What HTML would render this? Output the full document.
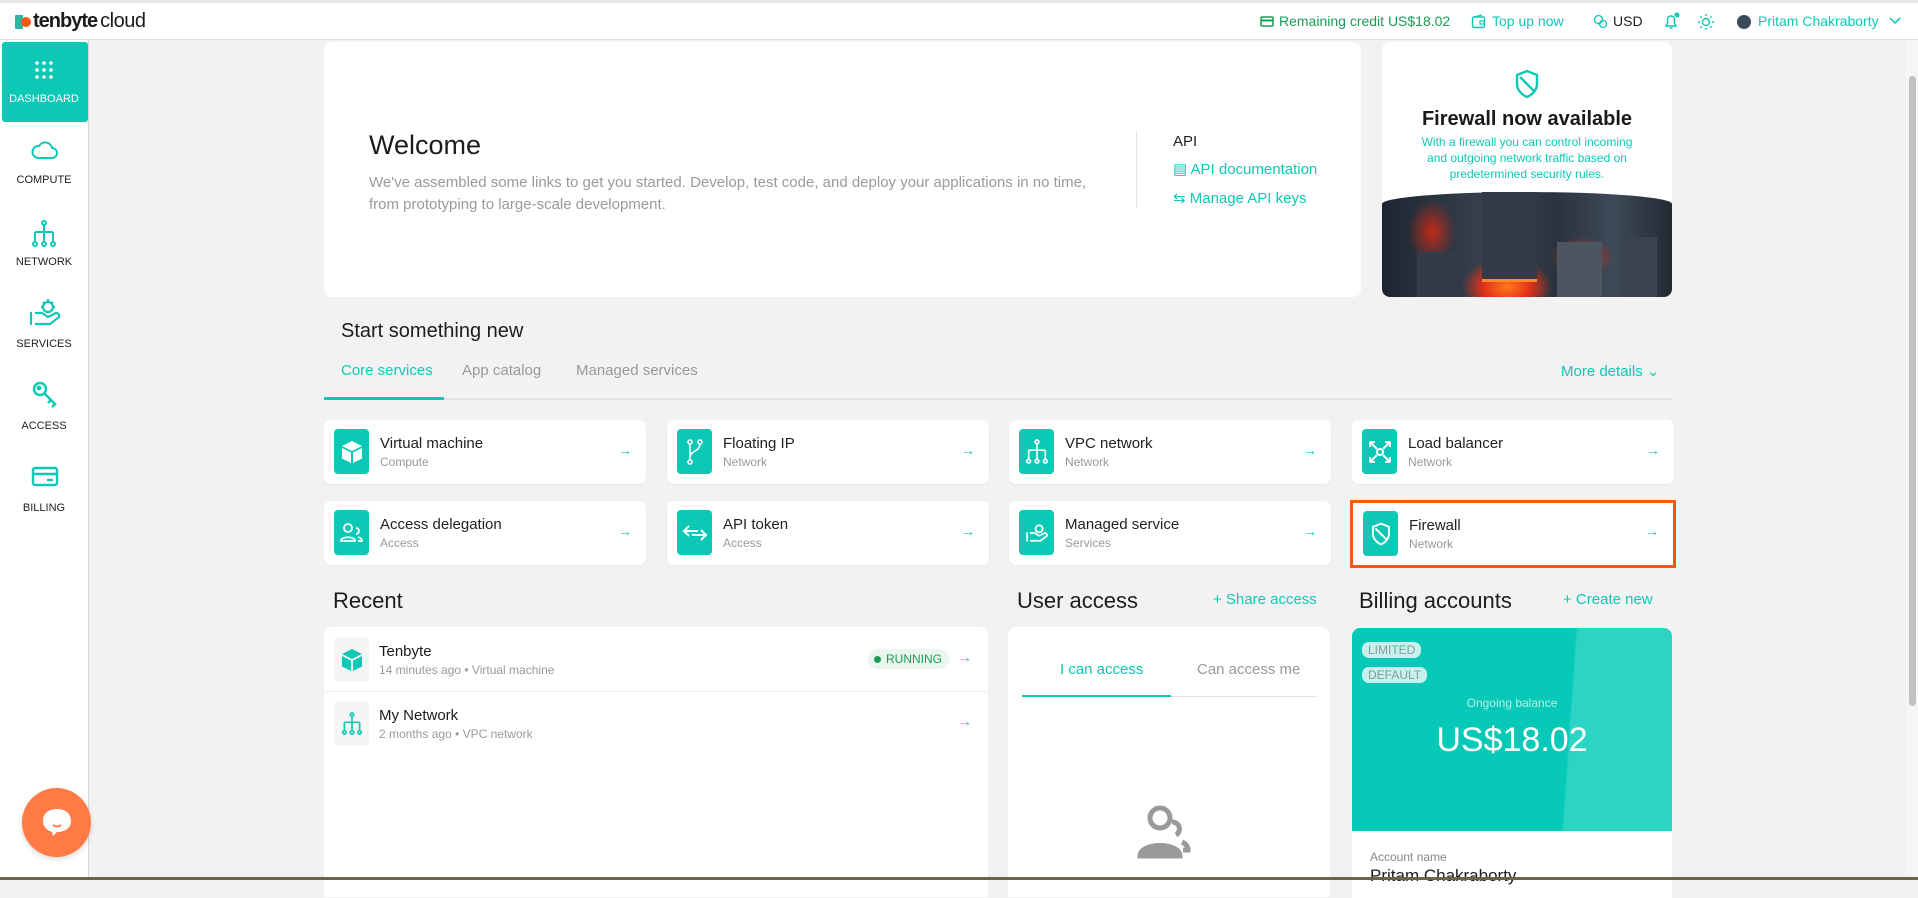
<!DOCTYPE html>
<html><head><meta charset="utf-8">
<style>
*{box-sizing:border-box;margin:0;padding:0}
body{width:1918px;height:880px;overflow:hidden;background:#f2f2f2;font-family:"Liberation Sans",sans-serif;color:#1c1c1c;position:relative}
.abs{position:absolute}
.t{color:#0fc8b6}
.hdr{left:0;top:0;width:1918px;height:40px;background:#fff;border-top:3px solid #e6e6e6;border-bottom:1px solid #dcdcdc}
.side{left:0;top:40px;width:89px;height:840px;background:#fff;border-right:1px solid #d9d9d9}
.nav{position:absolute;left:0;width:88px;text-align:center;font-size:11px;color:#222}
.card{position:absolute;background:#fff;border-radius:8px}
.svc{position:absolute;background:#fff;border-radius:7px;width:322px;height:64px;box-shadow:0 1px 2px rgba(0,0,0,.04)}
.svc .ic{position:absolute;left:10px;width:35px;height:45px;top:9px;background:#0cc9b6;border-radius:4px;display:flex;align-items:center;justify-content:center}
.svc .tt{position:absolute;left:56px;top:15px;font-size:15px;color:#222}
.svc .st{position:absolute;left:56px;top:35px;font-size:12px;color:#999}
.svc .ar{position:absolute;right:14px;top:22px;color:#0fc8b6;font-size:14px}
.h2{position:absolute;font-size:22px;color:#1c1c1c}
</style></head><body>

<div class="abs hdr">
  <div class="abs" style="left:15px;top:7px;display:flex;align-items:center">
    <div style="width:8px;height:14px;background:#2bb5a3;border-radius:1px"></div>
    <div style="width:10px;height:10px;background:#f45b19;border-radius:50%;margin-left:-2px"></div>
    <span style="font-size:20px;font-weight:bold;letter-spacing:-1px;margin-left:2px;color:#1b1b1b">tenbyte</span><span style="font-size:20px;color:#1b1b1b;margin-left:3px;letter-spacing:-0.5px">cloud</span>
  </div>
  <div class="abs" style="left:1260px;top:10px;font-size:14px;color:#1a9c55;display:flex;align-items:center;gap:5px">
    <svg width="14" height="11" viewBox="0 0 14 11"><rect x="1" y="1" width="12" height="9" rx="1" fill="none" stroke="#1a9c55" stroke-width="1.5"/><line x1="1" y1="4.5" x2="13" y2="4.5" stroke="#1a9c55" stroke-width="2"/></svg>Remaining credit US$18.02</div>
  <div class="abs t" style="left:1471px;top:10px;font-size:14px;display:flex;align-items:center;gap:6px">
    <svg width="15" height="15" viewBox="0 0 15 15"><rect x="1.5" y="3" width="12" height="10.5" rx="1.5" fill="none" stroke="#0fc8b6" stroke-width="1.4"/><path d="M3 3 L11 1" stroke="#0fc8b6" stroke-width="1.4"/><rect x="9" y="7" width="4" height="3" fill="none" stroke="#0fc8b6" stroke-width="1.2"/></svg>Top up now</div>
  <div class="abs" style="left:1593px;top:10px;font-size:14px;display:flex;align-items:center;gap:5px">
    <svg width="15" height="15" viewBox="0 0 15 15" fill="none" stroke="#0fc8b6" stroke-width="1.3"><circle cx="5.5" cy="5.5" r="4"/><circle cx="10" cy="10" r="3.5"/></svg>USD</div>
  <svg class="abs" style="left:1662px;top:8px" width="20" height="20" viewBox="0 0 20 20" fill="none" stroke="#0fc8b6" stroke-width="1.5"><path d="M4 15 H14 L12.5 12.5 V8.5 A3.5 3.5 0 0 0 5.5 8.5 V12.5 Z"/><path d="M7.5 17 H10.5"/><circle cx="15" cy="4" r="2.5" fill="#0fc8b6" stroke="none"/></svg>
  <svg class="abs" style="left:1697px;top:10px" width="18" height="18" viewBox="0 0 18 18" fill="none" stroke="#0fc8b6" stroke-width="1.4"><circle cx="9" cy="9" r="3.5"/><path d="M9 1v2M9 15v2M1 9h2M15 9h2M3.3 3.3l1.4 1.4M13.3 13.3l1.4 1.4M3.3 14.7l1.4-1.4M13.3 4.7l1.4-1.4"/></svg>
  <div class="abs" style="left:1737px;top:12px;width:14px;height:14px;border-radius:50%;background:#3c4a5a"></div>
  <div class="abs t" style="left:1758px;top:10px;font-size:14px">Pritam Chakraborty</div>
  <svg class="abs" style="left:1889px;top:14px" width="12" height="8" viewBox="0 0 12 8"><path d="M1 1 L6 6 L11 1" fill="none" stroke="#0fc8b6" stroke-width="1.5"/></svg>
</div>

<div class="abs side">
  <div class="abs" style="left:2px;top:2px;width:86px;height:80px;background:#0cc9b6;border-radius:3px"></div>
  <svg class="abs" style="left:34px;top:20px" width="20" height="20" viewBox="0 0 20 20" fill="#fff"><circle cx="3" cy="3" r="1.8"/><circle cx="10" cy="3" r="1.8"/><circle cx="17" cy="3" r="1.8"/><circle cx="3" cy="10" r="1.8"/><circle cx="10" cy="10" r="1.8"/><circle cx="17" cy="10" r="1.8"/><circle cx="3" cy="17" r="1.8"/><circle cx="10" cy="17" r="1.8"/><circle cx="17" cy="17" r="1.8"/></svg>
  <div class="nav" style="top:53px;color:#fff">DASHBOARD</div>
  <svg class="abs" style="left:31px;top:98px" width="28" height="22" viewBox="0 0 28 22" fill="none" stroke="#0fc8b6" stroke-width="2"><path d="M7 20 H21 A5 5 0 0 0 21 10 A7 7 0 0 0 8 8 A6 6 0 0 0 7 20 Z"/></svg>
  <div class="nav" style="top:134px">COMPUTE</div>
  <svg class="abs" style="left:31px;top:180px" width="26" height="28" viewBox="0 0 26 28" fill="none" stroke="#0fc8b6" stroke-width="2"><circle cx="13" cy="3" r="2"/><path d="M13 5V12M4 12H22M4 12V22M13 12V22M22 12V22"/><circle cx="4" cy="24" r="2"/><circle cx="13" cy="24" r="2"/><circle cx="22" cy="24" r="2"/></svg>
  <div class="nav" style="top:216px">NETWORK</div>
  <svg class="abs" style="left:28px;top:258px" width="34" height="30" viewBox="0 0 34 30" fill="none" stroke="#0fc8b6" stroke-width="2.2"><path d="M3 14V27"/><path d="M7 15H14L20 19L28 15A3 3 0 0 1 31 19L22 26H7"/><circle cx="20" cy="9" r="5"/><path d="M20 1V3M27 9H25M13 9H15M15 4L16.5 5.5M25 4L23.5 5.5"/></svg>
  <div class="nav" style="top:298px">SERVICES</div>
  <svg class="abs" style="left:31px;top:340px" width="28" height="30" viewBox="0 0 28 30" fill="none" stroke="#0fc8b6" stroke-width="2.4"><circle cx="9" cy="9" r="6"/><circle cx="8" cy="8" r="1.2" fill="#0fc8b6"/><path d="M13 13L25 25M20 20L17 23M24 24L21 27"/></svg>
  <div class="nav" style="top:380px">ACCESS</div>
  <svg class="abs" style="left:31px;top:426px" width="28" height="22" viewBox="0 0 28 22" fill="none" stroke="#0fc8b6" stroke-width="2.4"><rect x="2" y="2" width="24" height="17" rx="2"/><line x1="2" y1="8" x2="26" y2="8"/><line x1="16" y1="14" x2="22" y2="14"/></svg>
  <div class="nav" style="top:462px">BILLING</div>
  <div class="abs" style="left:22px;top:748px;width:69px;height:69px;border-radius:50%;background:#ff7a45;box-shadow:0 2px 6px rgba(0,0,0,.15)"></div>
  <svg class="abs" style="left:39px;top:765px" width="36" height="36" viewBox="0 0 36 36"><path d="M18 4 C27 4 32 9 32 16 C32 23 26 27 18 27 L14 31 L13 27 C7 25 4 21 4 16 C4 9 9 4 18 4Z" fill="#fff"/><path d="M14 20 Q18 23 22 20" stroke="#ff7a45" stroke-width="2" fill="none"/></svg>
</div>

<div class="card" style="left:324px;top:42px;width:1037px;height:255px">
  <div class="abs" style="left:45px;top:88px;font-size:27px;color:#1c1c1c">Welcome</div>
  <div class="abs" style="left:45px;top:130px;font-size:15px;color:#9a9a9a;line-height:22px;width:720px">We've assembled some links to get you started. Develop, test code, and deploy your applications in no time, from prototyping to large-scale development.</div>
  <div class="abs" style="left:812px;top:90px;width:1px;height:76px;background:#e2e2e2"></div>
  <div class="abs" style="left:849px;top:91px;font-size:15px;color:#222">API</div>
  <div class="abs t" style="left:849px;top:118px;font-size:15px">&#9636; API documentation</div>
  <div class="abs t" style="left:849px;top:147px;font-size:15px">&#8646; Manage API keys</div>
</div>

<div class="card" style="left:1382px;top:42px;width:290px;height:255px;overflow:hidden">
  <svg class="abs" style="left:133px;top:27px" width="24" height="30" viewBox="0 0 24 30" fill="none" stroke="#0fc8b6" stroke-width="2.4"><path d="M12 2L22 6V15C22 21 17 26 12 28C7 26 2 21 2 15V6Z"/><path d="M5 8L19 22"/></svg>
  <div class="abs" style="left:0;width:290px;top:66px;text-align:center;font-size:20px;font-weight:bold;color:#1a1a1a">Firewall now available</div>
  <div class="abs t" style="left:28px;width:234px;top:92px;text-align:center;font-size:12px;line-height:16px">With a firewall you can control incoming and outgoing network traffic based on predetermined security rules.</div>
  <div class="abs" style="left:0;top:150px;width:290px;height:110px;border-radius:50% 50% 0 0/12px 12px 0 0;background:radial-gradient(ellipse 60px 40px at 125px 95px,#ff7a1a 0%,#e0301a 40%,transparent 75%),radial-gradient(ellipse 40px 25px at 200px 65px,#d5301b 0%,transparent 80%),radial-gradient(ellipse 30px 40px at 50px 40px,#c02a1a 0%,transparent 80%),linear-gradient(90deg,#1d2630,#3a4552 40%,#2a333d 60%,#3e4a58 80%,#222a33)"></div>
  <div class="abs" style="left:100px;top:150px;width:55px;height:90px;background:#323b45;border-bottom:3px solid #ff8a2a"></div>
  <div class="abs" style="left:175px;top:200px;width:45px;height:60px;background:#4b5662"></div>
  <div class="abs" style="left:35px;top:210px;width:40px;height:50px;background:#333c46"></div>
  <div class="abs" style="left:240px;top:195px;width:35px;height:60px;background:#3a4450"></div>
</div>

<div class="h2" style="left:341px;top:320px;font-size:20px">Start something new</div>
<div class="abs t" style="left:341px;top:362px;font-size:15px">Core services</div>
<div class="abs" style="left:462px;top:362px;font-size:15px;color:#999">App catalog</div>
<div class="abs" style="left:576px;top:362px;font-size:15px;color:#999">Managed services</div>
<div class="abs t" style="left:1561px;top:362px;font-size:15px">More details &#8964;</div>
<div class="abs" style="left:324px;top:398px;width:1348px;height:2px;background:#e3e3e3"></div>
<div class="abs" style="left:324px;top:397px;width:120px;height:3px;background:#0cc9b6"></div>

<div class="svc" style="left:324px;top:420px"><div class="ic"><svg width="22" height="24" viewBox="0 0 22 24" fill="#fff"><path d="M11 1L21 6L11 11L1 6Z"/><path d="M1 8L10 12.5V23L1 18.5Z"/><path d="M21 8L12 12.5V23L21 18.5Z"/></svg></div><div class="tt">Virtual machine</div><div class="st">Compute</div><div class="ar">&#8594;</div></div>
<div class="svc" style="left:667px;top:420px"><div class="ic"><svg width="18" height="28" viewBox="0 0 18 28" fill="none" stroke="#fff" stroke-width="1.6"><circle cx="4" cy="4" r="2"/><circle cx="14" cy="4" r="2"/><circle cx="4" cy="24" r="2"/><path d="M4 6V22M14 6C14 14 4 12 4 20"/></svg></div><div class="tt">Floating IP</div><div class="st">Network</div><div class="ar">&#8594;</div></div>
<div class="svc" style="left:1009px;top:420px"><div class="ic"><svg width="24" height="26" viewBox="0 0 26 28" fill="none" stroke="#fff" stroke-width="1.8"><circle cx="13" cy="3" r="2"/><path d="M13 5V12M4 12H22M4 12V22M13 12V22M22 12V22"/><circle cx="4" cy="24" r="2"/><circle cx="13" cy="24" r="2"/><circle cx="22" cy="24" r="2"/></svg></div><div class="tt">VPC network</div><div class="st">Network</div><div class="ar">&#8594;</div></div>
<div class="svc" style="left:1352px;top:420px"><div class="ic"><svg width="24" height="24" viewBox="0 0 24 24" fill="none" stroke="#fff" stroke-width="2"><path d="M2 2L9 9M22 2L15 9M2 22L9 15M22 22L15 15M2 2h5M2 2v5M22 2h-5M22 2v5M2 22h5M2 22v-5M22 22h-5M22 22v-5"/><circle cx="12" cy="12" r="3"/></svg></div><div class="tt">Load balancer</div><div class="st">Network</div><div class="ar">&#8594;</div></div>

<div class="svc" style="left:324px;top:501px"><div class="ic"><svg width="26" height="22" viewBox="0 0 26 22" fill="none" stroke="#fff" stroke-width="1.8"><circle cx="9" cy="6" r="4"/><path d="M2 19C2 14 16 14 16 19Z"/><path d="M17 6A3 3 0 0 1 17 12M19 15C22 16 23 17 23 19H19"/></svg></div><div class="tt">Access delegation</div><div class="st">Access</div><div class="ar">&#8594;</div></div>
<div class="svc" style="left:667px;top:501px"><div class="ic"><svg width="26" height="20" viewBox="0 0 26 20" fill="none" stroke="#fff" stroke-width="2"><path d="M7 3L2 8L7 13M2 8H16M19 7L24 12L19 17M24 12H10"/></svg></div><div class="tt">API token</div><div class="st">Access</div><div class="ar">&#8594;</div></div>
<div class="svc" style="left:1009px;top:501px"><div class="ic"><svg width="24" height="22" viewBox="0 0 34 30" fill="none" stroke="#fff" stroke-width="2.4"><path d="M3 14V27"/><path d="M7 15H14L20 19L28 15A3 3 0 0 1 31 19L22 26H7"/><circle cx="20" cy="9" r="5"/></svg></div><div class="tt">Managed service</div><div class="st">Services</div><div class="ar">&#8594;</div></div>
<div class="abs" style="left:1350px;top:500px;width:326px;height:68px;border:3px solid #f25a12"></div>
<div class="svc" style="left:1353px;top:503px;width:320px;height:62px;border-radius:0"><div class="ic" style="top:8px"><svg width="20" height="24" viewBox="0 0 24 30" fill="none" stroke="#fff" stroke-width="2.4"><path d="M12 2L22 6V15C22 21 17 26 12 28C7 26 2 21 2 15V6Z"/><path d="M5 8L19 22"/></svg></div><div class="tt" style="top:14px">Firewall</div><div class="st" style="top:34px">Network</div><div class="ar" style="top:20px">&#8594;</div></div>

<div class="h2" style="left:333px;top:588px">Recent</div>
<div class="card" style="left:324px;top:627px;width:664px;height:270px;border-radius:8px 8px 0 0">
  <div class="abs" style="left:10px;top:10px;width:35px;height:45px;background:#f5f5f5;border-radius:4px;display:flex;align-items:center;justify-content:center"><svg width="22" height="24" viewBox="0 0 22 24" fill="#0fc8b6"><path d="M11 1L21 6L11 11L1 6Z"/><path d="M1 8L10 12.5V23L1 18.5Z"/><path d="M21 8L12 12.5V23L21 18.5Z"/></svg></div>
  <div class="abs" style="left:55px;top:16px;font-size:15px">Tenbyte</div>
  <div class="abs" style="left:55px;top:36px;font-size:12px;color:#999">14 minutes ago • Virtual machine</div>
  <div class="abs" style="left:544px;top:22px;width:81px;height:20px;background:#eaf6ee;border-radius:10px;font-size:12px;color:#1a9c55;line-height:20px;padding-left:6px"><span style="display:inline-block;width:7px;height:7px;border-radius:50%;background:#1a9c55;margin-right:5px"></span>RUNNING</div>
  <div class="abs t" style="left:634px;top:22px;font-size:14px">&#8594;</div>
  <div class="abs" style="left:0;top:64px;width:664px;height:1px;background:#ececec"></div>
  <div class="abs" style="left:10px;top:74px;width:35px;height:45px;background:#f5f5f5;border-radius:4px;display:flex;align-items:center;justify-content:center"><svg width="22" height="24" viewBox="0 0 26 28" fill="none" stroke="#0fc8b6" stroke-width="2"><circle cx="13" cy="3" r="2"/><path d="M13 5V12M4 12H22M4 12V22M13 12V22M22 12V22"/><circle cx="4" cy="24" r="2"/><circle cx="13" cy="24" r="2"/><circle cx="22" cy="24" r="2"/></svg></div>
  <div class="abs" style="left:55px;top:80px;font-size:15px">My Network</div>
  <div class="abs" style="left:55px;top:100px;font-size:12px;color:#999">2 months ago • VPC network</div>
  <div class="abs t" style="left:634px;top:86px;font-size:14px">&#8594;</div>
</div>

<div class="h2" style="left:1017px;top:588px">User access</div>
<div class="abs t" style="left:1213px;top:591px;font-size:15px">+ Share access</div>
<div class="card" style="left:1008px;top:627px;width:322px;height:270px;border-radius:8px 8px 0 0">
  <div class="abs t" style="left:52px;top:34px;font-size:15px">I can access</div>
  <div class="abs" style="left:189px;top:34px;font-size:15px;color:#999">Can access me</div>
  <div class="abs" style="left:14px;top:69px;width:295px;height:1px;background:#e3e3e3"></div>
  <div class="abs" style="left:14px;top:68px;width:149px;height:2px;background:#0cc9b6"></div>
  <svg class="abs" style="left:128px;top:175px" width="60" height="60" viewBox="0 0 60 60" fill="none" stroke="#9a9a9a" stroke-width="5"><circle cx="24" cy="16" r="10"/><path d="M4 54C4 40 44 40 44 54Z" fill="#9a9a9a"/><path d="M36 20A7 7 0 0 1 40 33M46 40C50 42 52 44 52 48H47"/></svg>
</div>

<div class="h2" style="left:1359px;top:588px">Billing accounts</div>
<div class="abs t" style="left:1563px;top:591px;font-size:15px">+ Create new</div>
<div class="card" style="left:1352px;top:628px;width:320px;height:270px;border-radius:8px 8px 0 0;overflow:hidden">
  <div class="abs" style="left:0;top:0;width:320px;height:203px;background:linear-gradient(94deg,#06c9b7 0%,#06c9b7 67%,#2bd4c3 67.5%,#2bd4c3 100%)"></div>
  <div class="abs" style="left:10px;top:14px;padding:1px 6px;background:#c6f1ec;border-radius:7px;font-size:12px;color:#8a9a98">LIMITED</div>
  <div class="abs" style="left:10px;top:39px;padding:1px 6px;background:#c6f1ec;border-radius:7px;font-size:12px;color:#8a9a98">DEFAULT</div>
  <div class="abs" style="left:0;width:320px;top:68px;text-align:center;font-size:12px;color:#b8efe8">Ongoing balance</div>
  <div class="abs" style="left:0;width:320px;top:93px;text-align:center;font-size:34px;color:#fff">US$18.02</div>
  <div class="abs" style="left:18px;top:222px;font-size:12px;color:#888">Account name</div>
  <div class="abs" style="left:18px;top:238px;font-size:17px;color:#1c1c1c">Pritam Chakraborty</div>
</div>

<div class="abs" style="left:1906px;top:40px;width:12px;height:840px;background:#f6f6f6"></div>
<div class="abs" style="left:1909px;top:76px;width:7px;height:630px;background:#c1c1c1;border-radius:4px"></div>
<div class="abs" style="left:0;top:877px;width:1918px;height:3px;background:#6b6350"></div>
</body></html>
